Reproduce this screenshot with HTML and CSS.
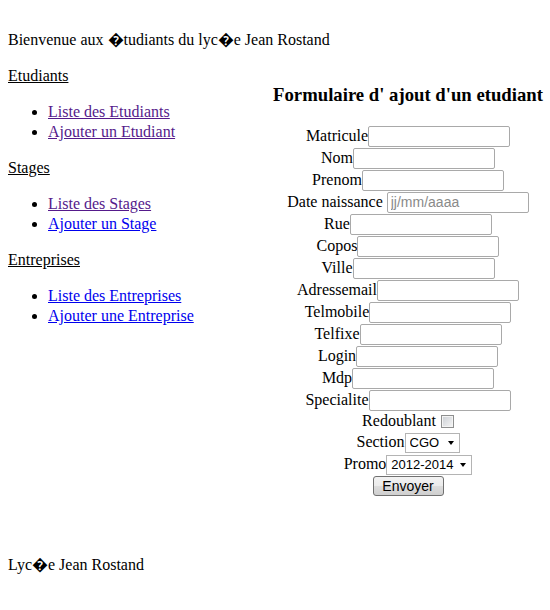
FILE: index.html
```html
<!DOCTYPE html>
<html>
<head>
<meta charset="utf-8">
<title>Ajout etudiant</title>
<link rel="stylesheet" href="styles.css">
</head>
<body>
<div class="page">
  <div class="welcome">Bienvenue aux �tudiants du lyc�e Jean Rostand</div>
  <div class="main">
    <div class="nav">
      <div class="nav-title">Etudiants</div>
      <ul class="nav-list">
        <li><a class="visited" href="#">Liste des Etudiants</a></li>
        <li><a class="visited" href="#">Ajouter un Etudiant</a></li>
      </ul>
      <div class="nav-title">Stages</div>
      <ul class="nav-list">
        <li><a class="visited" href="#">Liste des Stages</a></li>
        <li><a href="#">Ajouter un Stage</a></li>
      </ul>
      <div class="nav-title">Entreprises</div>
      <ul class="nav-list">
        <li><a href="#">Liste des Entreprises</a></li>
        <li><a href="#">Ajouter une Entreprise</a></li>
      </ul>
    </div>
    <div class="form-col">
      <h3 class="form-title">Formulaire d' ajout d'un etudiant</h3>
      <form class="form">
        <div class="row">Matricule<input class="field" type="text"></div>
        <div class="row">Nom<input class="field" type="text"></div>
        <div class="row">Prenom<input class="field" type="text"></div>
        <div class="row">Date naissance <input class="field date" type="text" placeholder="jj/mm/aaaa"></div>
        <div class="row">Rue<input class="field" type="text"></div>
        <div class="row">Copos<input class="field" type="text"></div>
        <div class="row">Ville<input class="field" type="text"></div>
        <div class="row">Adressemail<input class="field" type="text"></div>
        <div class="row">Telmobile<input class="field" type="text"></div>
        <div class="row">Telfixe<input class="field" type="text"></div>
        <div class="row">Login<input class="field" type="text"></div>
        <div class="row">Mdp<input class="field" type="password"></div>
        <div class="row">Specialite<input class="field" type="text"></div>
        <div class="row row-check">Redoublant <input class="check" type="checkbox"></div>
        <div class="row">Section<span class="select select-section"><select><option>CGO</option></select></span></div>
        <div class="row">Promo<span class="select select-promo"><select><option>2012-2014</option></select></span></div>
        <div class="row"><button class="submit" type="button">Envoyer</button></div>
      </form>
    </div>
  </div>
  <div class="footer">Lyc�e Jean Rostand</div>
</div>
</body>
</html>
```
FILE: styles.css
```css
html, body {
  margin: 0;
  padding: 0;
  background: #ffffff;
}

body {
  font-family: "Liberation Serif", "Times New Roman", serif;
  font-size: 16px;
  line-height: 20px;
  color: #000000;
}

.page {
  padding: 30px 0 0 8px;
}

.welcome {
  height: 20px;
}

.main {
  display: flex;
  margin-top: 16px;
}

.nav {
  width: 258px;
  flex: none;
}

.nav-title {
  text-decoration: underline;
}

.nav-list {
  margin: 16px 0;
  padding-left: 40px;
  list-style: disc;
}

.nav-list a {
  color: #0000ee;
  text-decoration: underline;
}

.nav-list a.visited {
  color: #551a8b;
}

.form-col {
  width: 284px;
  flex: none;
  text-align: center;
}

.form-title {
  margin: 18px 0 19px 0;
  font-size: 18.72px;
  line-height: 22px;
  font-weight: bold;
  white-space: nowrap;
}

.form {
  margin: 0;
}

.row {
  height: 22px;
  line-height: 22px;
  white-space: nowrap;
}

.row-check {
  height: 20px;
  line-height: 20px;
}

.field {
  box-sizing: border-box;
  width: 142px;
  height: 21px;
  margin: 0;
  padding: 1px 3px;
  border: 1px solid #a9a9a9;
  border-radius: 2px;
  background: #ffffff;
  vertical-align: middle;
  position: relative;
  top: -1px;
  font-family: "Liberation Sans", Arial, sans-serif;
  font-size: 14px;
}

.field::placeholder {
  color: #8a8a8a;
}

.check {
  -webkit-appearance: none;
  appearance: none;
  box-sizing: border-box;
  width: 13px;
  height: 13px;
  margin: 0 0 0 1px;
  border: 1px solid #8e8f8f;
  background: linear-gradient(135deg, #cbcfd5 0%, #f6f6f6 100%);
  box-shadow: inset 0 0 0 1px #f4f4f4;
  vertical-align: middle;
  position: relative;
  top: -1px;
}

.select {
  position: relative;
  display: inline-block;
  vertical-align: middle;
  line-height: 0;
}

.select select {
  -webkit-appearance: none;
  appearance: none;
  box-sizing: border-box;
  height: 20px;
  margin: 0;
  padding: 0 0 0 4px;
  border: 1px solid #b4b4b4;
  border-radius: 0;
  background: #ffffff;
  color: #000000;
  font-family: "Liberation Sans", Arial, sans-serif;
  font-size: 13px;
  line-height: 18px;
}

.select-section select {
  width: 55px;
}

.select-promo select {
  width: 86px;
}

.select::after {
  content: "";
  position: absolute;
  right: 6px;
  top: 8px;
  width: 0;
  height: 0;
  border-top: 4px solid #000000;
  border-left: 3px solid transparent;
  border-right: 3px solid transparent;
  pointer-events: none;
}

.submit {
  box-sizing: border-box;
  width: 71px;
  height: 20px;
  margin: 0;
  padding: 0;
  border: 1px solid #707070;
  border-radius: 3px;
  background: linear-gradient(#f2f2f2 0%, #ebebeb 50%, #dddddd 50%, #cfcfcf 100%);
  font-family: "Liberation Sans", Arial, sans-serif;
  font-size: 14px;
  line-height: 16px;
  color: #000000;
  vertical-align: middle;
  position: relative;
  top: -1px;
}

.footer {
  margin-top: 58px;
  height: 20px;
}
```
